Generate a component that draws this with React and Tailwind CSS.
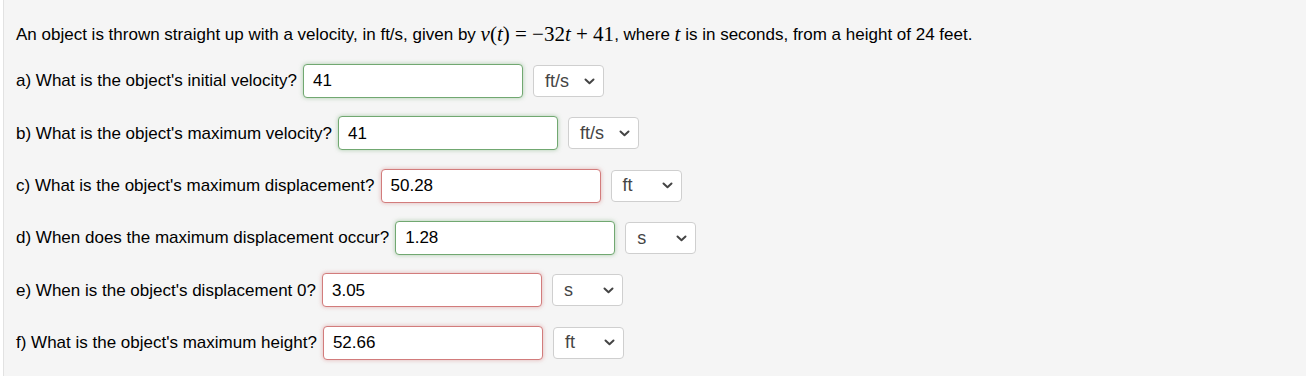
import React from "react";

const Chevron = () => (
  <svg width="11" height="7" viewBox="0 0 11 7" className="shrink-0">
    <path d="M1.5 1.5 L5.5 5.2 L9.5 1.5" fill="none" stroke="#444" strokeWidth="2" strokeLinecap="round" strokeLinejoin="round" />
  </svg>
);

const rows = [
  { label: "a) What is the object's initial velocity?", value: "41", ok: true, unit: "ft/s" },
  { label: "b) What is the object's maximum velocity?", value: "41", ok: true, unit: "ft/s" },
  { label: "c) What is the object's maximum displacement?", value: "50.28", ok: false, unit: "ft" },
  { label: "d) When does the maximum displacement occur?", value: "1.28", ok: true, unit: "s" },
  { label: "e) When is the object's displacement 0?", value: "3.05", ok: false, unit: "s" },
  { label: "f) What is the object's maximum height?", value: "52.66", ok: false, unit: "ft" },
];

function Row({ label, value, ok, unit }) {
  return (
    <div className="flex items-center h-[52.3px]">
      <span className="whitespace-nowrap">{label}</span>
      <div
        className={
          ok
            ? "ml-[6px] w-[220px] h-[34px] bg-white rounded-[4px] border border-[#71a871] shadow-[0_0_4px_rgba(113,168,113,0.55)] flex items-center pl-[9px] text-black"
            : "ml-[6px] w-[220px] h-[34px] bg-white rounded-[4px] border border-[#d27c7c] shadow-[0_0_4px_rgba(210,124,124,0.55)] flex items-center pl-[9px] text-black"
        }
      >
        {value}
      </div>
      <div className="ml-[10px] w-[71px] h-[32px] bg-white rounded-[4px] border border-[#cfcfcf] flex items-center justify-between pl-[11px] pr-[8px] text-[#444] text-[18px]">
        <span>{unit}</span>
        <Chevron />
      </div>
    </div>
  );
}

export default function App() {
  return (
    <div className="w-[1306px] h-[376px] bg-white pl-[3px]" style={{ fontFamily: '"Liberation Sans", Arial, sans-serif' }}>
      <div className="h-full bg-[#f5f5f5] border-l border-[#e2e2e2] pl-[12px] pt-[23px] text-[17px] text-black">
        <p className="h-[24px] flex items-center whitespace-nowrap">
          An object is thrown straight up with a velocity, in ft/s, given by&nbsp;
          <span className="text-[21px]" style={{ fontFamily: '"Liberation Serif", "DejaVu Serif", serif' }}>
            <i>v</i>(<i>t</i>)&nbsp;=&nbsp;−32<i>t</i>&nbsp;+&nbsp;41
          </span>
          , where&nbsp;
          <i className="text-[21px]" style={{ fontFamily: '"Liberation Serif", "DejaVu Serif", serif' }}>t</i>
          &nbsp;is in seconds, from a height of 24 feet.
        </p>
        <div className="mt-[8px]">
          {rows.map((r) => (
            <Row key={r.label} {...r} />
          ))}
        </div>
      </div>
    </div>
  );
}
